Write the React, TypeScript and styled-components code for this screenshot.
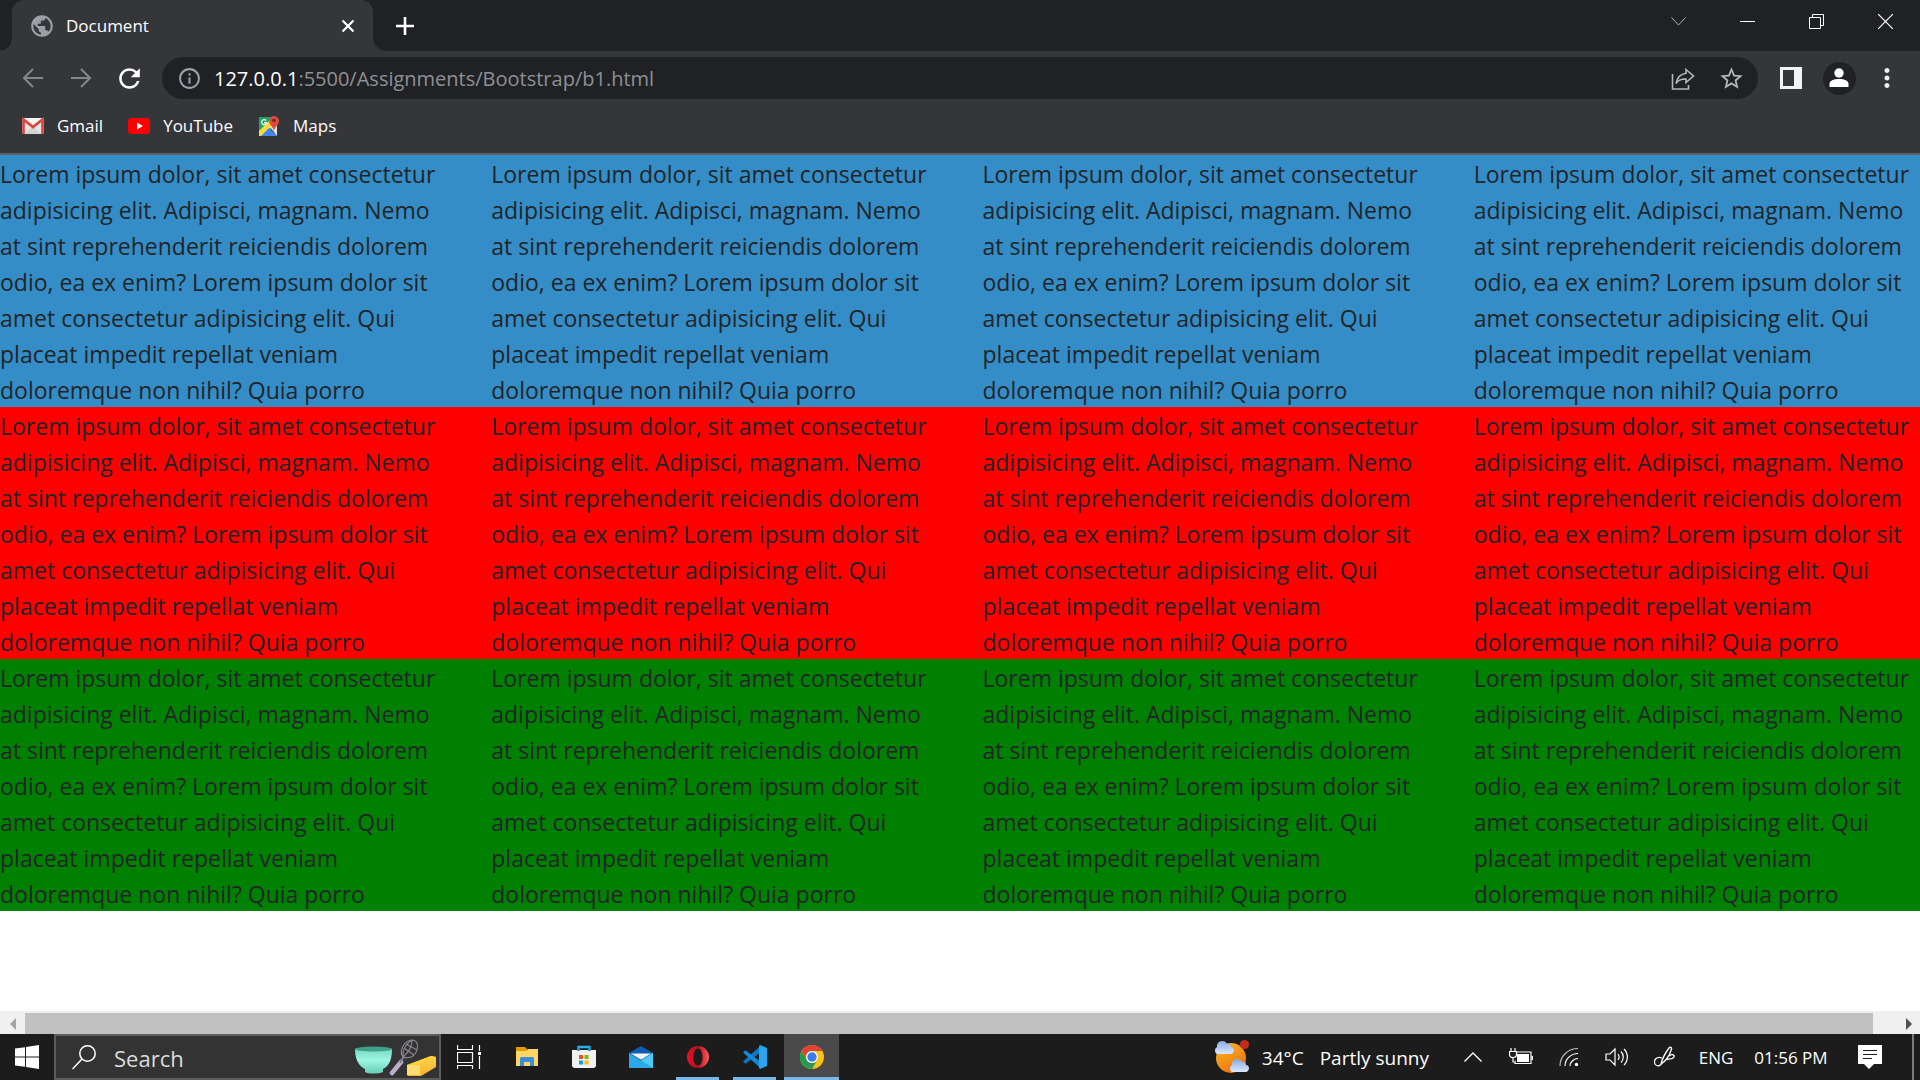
import React from 'react';
import styled, { createGlobalStyle } from 'styled-components';
import { MdPublic, MdRefresh, MdInfoOutline, MdStarBorder, MdMoreVert } from 'react-icons/md';

const GlobalStyle = createGlobalStyle`
  * { box-sizing: border-box; }
  body { margin: 0; background: #fff; font-family: "Open Sans", "Noto Sans", sans-serif; }
  button, input { font: inherit; color: inherit; }
  svg { display: block; flex: none; }
`;

const Screen = styled.div`
  display: flex;
  flex-direction: column;
  height: 100vh;
  overflow: hidden;
`;

/* ---------- browser frame ---------- */

const TabStrip = styled.header`
  display: flex;
  justify-content: space-between;
  height: 51px;
  flex: none;
  background: #202124;
  color: #fff;
`;

const Tabs = styled.div`
  display: flex;
  padding-left: 12px;
`;

const Tab = styled.div`
  position: relative;
  display: flex;
  align-items: center;
  width: 361px;
  padding: 0 13px 0 17px;
  background: #35363a;
  border-radius: 12px 12px 0 0;
  font-size: 17px;

  &::before,
  &::after {
    content: "";
    position: absolute;
    bottom: 0;
    width: 12px;
    height: 12px;
  }
  &::before {
    right: 100%;
    background: radial-gradient(circle at 0 0, transparent 11px, #35363a 12px);
  }
  &::after {
    left: 100%;
    background: radial-gradient(circle at 100% 0, transparent 11px, #35363a 12px);
  }
`;

const TabTitle = styled.span`
  flex: 1;
  margin-left: 11px;
  line-height: 24px;
`;

const IconButton = styled.button<{ $w?: number; $color?: string }>`
  display: flex;
  align-items: center;
  justify-content: center;
  flex: none;
  width: ${(p) => p.$w ?? 48}px;
  padding: 0;
  border: 0;
  background: none;
  color: ${(p) => p.$color ?? '#fff'};
`;

const NewTab = styled(IconButton)`
  margin-left: 16px;
`;

const WindowControls = styled.div`
  display: flex;
  height: 43px;
`;

const Toolbar = styled.nav`
  display: flex;
  flex: none;
  height: 54px;
  padding: 0 9px;
  background: #35363a;
`;

const AddressBar = styled.form`
  display: flex;
  align-items: center;
  flex: 1;
  min-width: 0;
  margin: 6px 9px;
  padding: 1px 3px 0 15px;
  border-radius: 21px;
  background: #202124;
  font-size: 20px;
  line-height: 28px;
`;

const Host = styled.label`
  margin-left: 12px;
  color: #fff;
`;

const UrlInput = styled.input`
  flex: 1;
  min-width: 0;
  padding: 0;
  border: 0;
  outline: 0;
  background: none;
  color: #8f9093;
`;

const Avatar = styled.span`
  display: grid;
  place-items: center;
  width: 33px;
  height: 33px;
  border-radius: 50%;
  background: #202124;
`;

const Bookmarks = styled.nav`
  display: flex;
  align-items: center;
  flex: none;
  gap: 25px;
  height: 50px;
  padding: 0 22px 6px;
  border-bottom: 2px solid #5f6064;
  background: #35363a;
`;

const Bookmark = styled.a`
  display: flex;
  align-items: center;
  gap: 13px;
  color: #fff;
  font-size: 17px;
  line-height: 24px;
  text-decoration: none;
`;

/* ---------- web page ---------- */

const Viewport = styled.main`
  flex: 1;
  min-height: 0;
  padding-top: 0;
  overflow: hidden;
  background: #fff;
`;

const Band = styled.section<{ $bg: string }>`
  display: grid;
  grid-template-columns: repeat(4, 1fr);
  width: calc(100% + 45px);
  padding-top: 1px;
  background: ${(p) => p.$bg};
`;

const Copy = styled.p`
  margin: 0 0 -1px;
  color: #212529;
  font-size: 23px;
  line-height: 36px;
  white-space: nowrap;
`;

const Scrollbar = styled.div`
  display: flex;
  flex: none;
  height: 23px;
  padding-top: 2px;
  background: #f0f0f0;
`;

const Thumb = styled.div`
  flex: 1;
  background: #c1c1c1;
`;

const ScrollButton = styled(IconButton)`
  height: 21px;
`;

/* ---------- taskbar ---------- */

const Taskbar = styled.footer`
  display: flex;
  flex: none;
  height: 46px;
  background: #1c1c1c;
  color: #fff;
`;

const SearchBox = styled.label`
  display: flex;
  align-items: center;
  width: 387px;
  padding: 0 2px 0 16px;
  border: 2px solid #5c5c5c;
  background: #333;
`;

const SearchInput = styled.input`
  flex: 1;
  min-width: 0;
  padding: 2px 0 0;
  margin-left: 18px;
  border: 0;
  outline: 0;
  background: none;
  font-size: 22px;
  line-height: 30px;

  &::placeholder {
    color: #dcdcdc;
    opacity: 1;
  }
`;

const AppButton = styled(IconButton)`
  width: 57px;
`;

const RunningApp = styled(AppButton)`
  width: 43px;
  margin: 0 7px;
  border-top: 3px solid transparent;
  border-bottom: 3px solid #76b9ed;
`;

const ActiveApp = styled(AppButton)`
  width: 55px;
  margin-left: 1px;
  border-top: 3px solid #4a4a4a;
  border-bottom: 3px solid #76b9ed;
  background: #4a4a4a;
`;

const Apps = styled.div`
  display: flex;
  padding-right: 1px;
`;

const Tray = styled.div`
  display: flex;
  margin-left: auto;
`;

const Weather = styled.button`
  display: flex;
  align-items: center;
  padding: 0 20px 0 0;
  border: 0;
  background: none;
  color: #fff;
  font-size: 19px;
  line-height: 28px;
`;

const WeatherText = styled.span`
  display: flex;
  gap: 16px;
  padding: 2px 0 0 12px;
`;

const TrayText = styled(IconButton)`
  font-size: 17px;
  white-space: nowrap;
`;

const ShowDesktop = styled.button`
  width: 8px;
  margin-left: 11px;
  padding: 0;
  border: 0;
  border-left: 2px solid #7a7a7a;
  background: none;
`;

/* ---------- drawings ---------- */

type ArtProps = { w: number; h: number; children: React.ReactNode };
const Art = ({ w, h, children }: ArtProps) => (
  <svg width={w} height={h} viewBox={`0 0 ${w} ${h}`} fill="none" aria-hidden="true">
    {children}
  </svg>
);

const Arrow = ({ flip }: { flip?: boolean }) => (
  <Art w={20} h={20}>
    <path
      d={flip ? 'M0 10h18.5M10 1l9 9-9 9' : 'M20 10H1.5M10 1l-9 9 9 9'}
      stroke="#85868a"
      strokeWidth="2"
    />
  </Art>
);

const GmailIcon = () => (
  <Art w={22} h={18}>
    <rect x="0" y="1" width="22" height="16" rx="1.5" fill="#e6e6e6" />
    <path d="M3 17l8-8 8 8z" fill="#d3d3d3" />
    <path d="M3 1h16l-8 7z" fill="#f7f7f7" />
    <path d="M1.5 17V2.5L11 10l9.500-7.500V17" stroke="#d8453a" strokeWidth="2.600" />
  </Art>
);

const YouTubeIcon = () => (
  <Art w={22} h={16}>
    <rect width="22" height="16" rx="3.500" fill="#f00" />
    <path d="M9 4.500l6 3.500-6 3.500z" fill="#fff" />
  </Art>
);

const MapsIcon = () => (
  <Art w={22} h={22}>
    <path d="M1 2h17v8L7 21H1z" fill="#1fa463" />
    <path d="M1 16L14 3l4 4L4 21H1z" fill="#fdd93b" />
    <path d="M3 21l8-8 8 8z" fill="#4387f5" />
    <path d="M12 12l6-6 1 2v13z" fill="#e4e4e4" />
    <path d="M16 1a5 5 0 0 1 5 5c0 4-4 5-5 10-1-5-5-6-5-10a5 5 0 0 1 5-5z" fill="#dd4b3e" />
    <circle cx="16" cy="5.500" r="1.800" fill="#7c201a" />
    <path d="M8 5.500a2.500 2.500 0 1 0 .5 2.200H6" stroke="#fff" strokeWidth="1.200" />
  </Art>
);

const ShareIcon = () => (
  <Art w={24} h={22}>
    <path d="M1.500 6v15h16v-4" stroke="#b5b6b9" strokeWidth="1.600" />
    <path d="M15 1.500l7.500 6.500-7.500 6.500V11c-5-.2-8 1.300-10 4.500C6 10 9 6 15 5.200z" stroke="#b5b6b9" strokeWidth="1.600" />
  </Art>
);

const SidePanelIcon = () => (
  <Art w={22} h={22}>
    <path fillRule="evenodd" d="M0 0h22v22H0zM3 3v16h11V3z" fill="#f1f3f4" />
  </Art>
);

const PersonIcon = () => (
  <Art w={20} h={20}>
    <circle cx="10" cy="5" r="4.700" fill="#fff" />
    <path d="M.5 19v-3c0-3.500 4-5 9.500-5s9.500 1.500 9.500 5v3z" fill="#fff" />
  </Art>
);

const SearchArt = () => (
  <Art w={82} h={38}>
    <defs>
      <linearGradient id="bowl" x1="0" y1="0" x2="0" y2="1">
        <stop offset="0" stopColor="#73d8c0" />
        <stop offset=".45" stopColor="#a0f6e4" />
        <stop offset="1" stopColor="#64cdb6" />
      </linearGradient>
      <linearGradient id="butter" x1="0" y1="0" x2="0" y2="1">
        <stop offset="0" stopColor="#fbd246" />
        <stop offset="1" stopColor="#f9b233" />
      </linearGradient>
    </defs>
    <path d="M0 11c0 11 4 17 10 20v3c3 2 14 2 18 0v-3c6-3 9-9 9-20z" fill="url(#bowl)" />
    <ellipse cx="18.500" cy="11" rx="18.500" ry="2.600" fill="#3f9f8d" />
    <path d="M37 35l9-11" stroke="#b9b0cc" strokeWidth="4.500" strokeLinecap="round" />
    <path d="M45 25l4-7" stroke="#80788e" strokeWidth="2" />
    <g stroke="#8d8698" strokeWidth="1.100">
      <path d="M48 19c-4-5 0-16 9-17 8 0 7 13-1 17-3 1-6 1-8 0z" />
      <path d="M48 19c-1-7 3-14 9-17M48 19c4-4 9-8 9-17" />
      <path d="M49 10l10 7M51 6l11 6" />
    </g>
    <path d="M52 27l24-9 5 1v10l-15 9H53l-1-1z" fill="url(#butter)" />
    <path d="M52 27l12-1 17-7-5-1-24 9z" fill="#ffcf3f" />
    <path d="M52 27h13v10H52z" fill="#ffdc72" />
  </Art>
);

const TaskViewIcon = () => (
  <Art w={26} h={24}>
    <path d="M.5 0v4.500h15V0M.5 24v-3.500h15V24M.5 7.500h15v10H.5zM22.500 0v6M22.500 11v13" stroke="#fff" strokeWidth="1.200" />
    <path d="M21 7h3v3h-3z" fill="#fff" />
  </Art>
);

const FolderIcon = () => (
  <Art w={22} h={22}>
    <path d="M0 1h9l2 2v4H0z" fill="#e19a07" />
    <path d="M0 5h10l2-2h10v17H0z" fill="#ffd566" />
    <path d="M4 20v-8l1-1h12l1 1v8h-4v-4H8v4z" fill="#3b8fd8" />
  </Art>
);

const StoreIcon = () => (
  <Art w={24} h={24}>
    <path d="M6.500 7V2h11v5" stroke="#29aee8" strokeWidth="2.400" />
    <path d="M0 5h24v15a3 3 0 0 1-3 3H3a3 3 0 0 1-3-3z" fill="#f1f1f1" />
    <path d="M6.500 6V2.500M17.500 6V2.500" stroke="#1c8fd0" strokeWidth="2.400" />
    <path d="M7 10h4v4H7z" fill="#f25022" />
    <path d="M12.500 10h4v4h-4z" fill="#7fba00" />
    <path d="M7 15.500h4v4H7z" fill="#00a4ef" />
    <path d="M12.500 15.500h4v4h-4z" fill="#ffb900" />
  </Art>
);

const MailIcon = () => (
  <Art w={24} h={24}>
    <path d="M0 8l12-7 12 7v6H0z" fill="#0f5db3" />
    <path d="M0 8l12 7.500L24 8v15H0z" fill="#2ba7ea" />
    <path d="M24 8v15L12 15.500z" fill="#4dcaf8" />
    <path d="M2 8.500h20L12 14.800z" fill="#f4f4f4" />
  </Art>
);

const OperaIcon = () => (
  <Art w={22} h={22}>
    <defs>
      <linearGradient id="opera" x1="0" y1="0" x2="1" y2="0">
        <stop offset="0" stopColor="#e8112b" />
        <stop offset=".5" stopColor="#b30e1c" />
        <stop offset="1" stopColor="#ff5c5c" />
      </linearGradient>
    </defs>
    <path
      fillRule="evenodd"
      d="M11 0a11 11 0 1 1 0 22 11 11 0 0 1 0-22zM11 2.500C8 2.500 6.500 6.500 6.500 11S8 19.500 11 19.500s4.500-4 4.500-8.500-1.500-8.500-4.500-8.500z"
      fill="url(#opera)"
    />
  </Art>
);

const CodeIcon = () => (
  <Art w={24} h={24}>
    <path d="M18 .5L0 16.500l2.500 2.300L18 7z" fill="#0a78c4" />
    <path d="M18 23.500L0 7.500l2.500-2.300L18 17z" fill="#1489d8" />
    <path d="M17 0l7 3v18l-7 3-1-1.500V1.500z" fill="#27a5f2" />
  </Art>
);

const ChromeIcon = () => (
  <Art w={24} h={24}>
    <circle cx="12" cy="12" r="12" fill="#fbc116" />
    <path d="M1.600 6A12 12 0 0 1 22.400 6H12a6 6 0 0 0-5.200 9z" fill="#dc4437" />
    <path d="M1.600 6A12 12 0 0 0 12 24l5.200-9A6 6 0 0 1 6.800 15z" fill="#249c50" />
    <circle cx="12" cy="12" r="6" fill="#fff" />
    <circle cx="12" cy="12" r="4.700" fill="#3b7ded" />
  </Art>
);

const CLOUD = 'M4 14a4 4 0 0 1 0-7 5 5 0 0 1 5-6c3 0 4 1 5 3 3-1 4 1 4 3 4 0 4 6 0 7z';

const WeatherIcon = () => (
  <Art w={37} h={34}>
    <defs>
      <linearGradient id="sun" x1="0" y1="0" x2=".6" y2="1">
        <stop offset="0" stopColor="#f9b928" />
        <stop offset="1" stopColor="#ee7410" />
      </linearGradient>
      <linearGradient id="cloud" x1="0" y1="0" x2="0" y2="1">
        <stop offset="0" stopColor="#86aae6" />
        <stop offset="1" stopColor="#dce9fb" />
      </linearGradient>
    </defs>
    <circle cx="18" cy="18" r="15" fill="url(#sun)" />
    <path d={CLOUD} fill="url(#cloud)" />
    <path d={CLOUD} transform="translate(15 18)" fill="url(#cloud)" />
    <circle cx="31.500" cy="4.500" r="4.500" fill="#c42b1c" />
  </Art>
);

const BatteryIcon = () => (
  <Art w={24} h={18}>
    <path d="M8 4h14v11.500H6v-3" stroke="#fff" strokeWidth="1.200" />
    <path d="M8 6h12v8H8z" fill="#fff" />
    <path d="M22.500 8H24v4h-1.500z" fill="#fff" />
    <path d="M.5 3.500h7v3c0 2-1 3-3.500 3s-3.500-1-3.500-3zM2 0v3.500M6 0v3.500M4 9.500V14h2" fill="#1c1c1c" stroke="#fff" strokeWidth="1.200" />
  </Art>
);

const WifiIcon = () => (
  <Art w={20} h={20}>
    <g stroke="#fff" strokeWidth="1.200">
      <path d="M1 19C1 9 9 1.500 19 1.500" stroke="#bbb" />
      <path d="M6 19c0-7 6-12.500 13-12.500M11 19c0-4 4-7.500 8-7.500" />
    </g>
    <circle cx="17.500" cy="17.500" r="1.700" fill="#fff" />
  </Art>
);

const SpeakerIcon = () => (
  <Art w={24} h={20}>
    <path d="M1 7h4l5-5v16l-5-5H1z" stroke="#fff" strokeWidth="1.200" />
    <path d="M13 7c1.500 2 1.500 4 0 6M16 4.500c3 3 3 8 0 11M19 2c4.500 4.500 4.500 11.500 0 16" stroke="#fff" strokeWidth="1.200" />
  </Art>
);

const PenIcon = () => (
  <Art w={22} h={22}>
    <path
      d="M7 18c1-4 5-12 8-16 1-1.500 3-.5 2.500 1C16 8 12 15 7 18zM8 12c-5-2-9 2-7 6 2 3 6 2 7-1M15 10c4-3 7 0 4 2-2 1.500-5 0-6 2"
      stroke="#fff"
      strokeWidth="1.300"
    />
  </Art>
);

const NoticeIcon = () => (
  <Art w={24} h={24}>
    <path d="M0 0h24v19h-8l-5 5-5-5H0z" fill="#fff" />
    <path d="M5 5.500h14M5 9.500h14M5 13.500h9" stroke="#1c1c1c" strokeWidth="1.200" />
  </Art>
);

/* ---------- content ---------- */

const LINES = [
  'Lorem ipsum dolor, sit amet consectetur',
  'adipisicing elit. Adipisci, magnam. Nemo',
  'at sint reprehenderit reiciendis dolorem',
  'odio, ea ex enim? Lorem ipsum dolor sit',
  'amet consectetur adipisicing elit. Qui',
  'placeat impedit repellat veniam',
  'doloremque non nihil? Quia porro',
];

const BANDS = ['#348dc6', '#ff0000', '#008000'];

const BOOKMARKS = [
  { name: 'Gmail', icon: <GmailIcon /> },
  { name: 'YouTube', icon: <YouTubeIcon /> },
  { name: 'Maps', icon: <MapsIcon /> },
];

const Paragraph = () => (
  <Copy>
    {LINES.map((line) => (
      <React.Fragment key={line}>
        {line}
        <br />
      </React.Fragment>
    ))}
  </Copy>
);

export default function App() {
  return (
    <Screen>
      <GlobalStyle />
      <TabStrip>
        <Tabs>
          <Tab>
            <MdPublic size={26} color="#9aa0a6" />
            <TabTitle>Document</TabTitle>
            <IconButton $w={24} aria-label="Close tab">
              <Art w={14} h={14}>
                <path d="M1.500 1.500l11 11M12.500 1.500l-11 11" stroke="currentColor" strokeWidth="2.200" />
              </Art>
            </IconButton>
          </Tab>
          <NewTab $w={32} aria-label="New tab">
            <Art w={18} h={18}>
              <path d="M9 0v18M0 9h18" stroke="currentColor" strokeWidth="2.600" />
            </Art>
          </NewTab>
        </Tabs>
        <WindowControls>
          <IconButton $w={69} aria-label="Search tabs">
            <Art w={15} h={9}>
              <path d="M.5.5l7 7.500 7-7.500" stroke="#b4b4b4" />
            </Art>
          </IconButton>
          <IconButton $w={69} aria-label="Minimize">
            <Art w={15} h={1}>
              <path d="M0 .5h15" stroke="currentColor" />
            </Art>
          </IconButton>
          <IconButton $w={69} aria-label="Restore">
            <Art w={15} h={15}>
              <path d="M.5 3.500h11v11H.5zM3.500 3.500v-3h11v11h-3" stroke="currentColor" />
            </Art>
          </IconButton>
          <IconButton $w={69} aria-label="Close">
            <Art w={15} h={15}>
              <path d="M0 0l15 15M15 0L0 15" stroke="currentColor" strokeWidth="1.200" />
            </Art>
          </IconButton>
        </WindowControls>
      </TabStrip>

      <Toolbar>
        <IconButton aria-label="Back">
          <Arrow />
        </IconButton>
        <IconButton aria-label="Forward">
          <Arrow flip />
        </IconButton>
        <IconButton aria-label="Reload">
          <MdRefresh size={31} />
        </IconButton>
        <AddressBar onSubmit={(e) => e.preventDefault()}>
          <MdInfoOutline size={25} color="#9aa0a6" />
          <Host htmlFor="url">127.0.0.1</Host>
          <UrlInput id="url" defaultValue=":5500/Assignments/Bootstrap/b1.html" />
          <IconButton type="button" aria-label="Share">
            <ShareIcon />
          </IconButton>
          <IconButton type="button" $color="#b5b6b9" aria-label="Bookmark this page">
            <MdStarBorder size={27} />
          </IconButton>
        </AddressBar>
        <IconButton aria-label="Side panel">
          <SidePanelIcon />
        </IconButton>
        <IconButton aria-label="Profile">
          <Avatar>
            <PersonIcon />
          </Avatar>
        </IconButton>
        <IconButton $color="#f1f3f4" aria-label="Menu">
          <MdMoreVert size={30} />
        </IconButton>
      </Toolbar>

      <Bookmarks>
        {BOOKMARKS.map((b) => (
          <Bookmark key={b.name} href="#">
            {b.icon}
            {b.name}
          </Bookmark>
        ))}
      </Bookmarks>

      <Viewport>
        {BANDS.map((bg) => (
          <Band key={bg} $bg={bg}>
            <Paragraph />
            <Paragraph />
            <Paragraph />
            <Paragraph />
          </Band>
        ))}
      </Viewport>

      <Scrollbar>
        <ScrollButton $w={25} aria-label="Scroll left">
          <Art w={6} h={12}>
            <path d="M6 0v12L0 6z" fill="#a3a3a3" />
          </Art>
        </ScrollButton>
        <Thumb />
        <ScrollButton $w={47} aria-label="Scroll right">
          <Art w={30} h={12}>
            <path d="M24 0v12l6-6z" fill="#505050" />
          </Art>
        </ScrollButton>
      </Scrollbar>

      <Taskbar>
        <IconButton $w={54} aria-label="Start">
          <Art w={24} h={24}>
            <path d="M0 3.500l10-1.300V11.500H0zM11 2l13-2v11.500H11zM0 12.500h10v9.300L0 20.500zM11 12.500h13V24l-13-2z" fill="#fff" />
          </Art>
        </IconButton>
        <SearchBox>
          <Art w={24} h={25}>
            <circle cx="15.500" cy="8.500" r="7.700" stroke="#fff" strokeWidth="1.500" />
            <path d="M10 14L.5 24" stroke="#fff" strokeWidth="1.500" />
          </Art>
          <SearchInput placeholder="Search" aria-label="Search" />
          <SearchArt />
        </SearchBox>
        <Apps>
          <AppButton aria-label="Task view">
            <TaskViewIcon />
          </AppButton>
          <AppButton aria-label="File Explorer">
            <FolderIcon />
          </AppButton>
          <AppButton aria-label="Microsoft Store">
            <StoreIcon />
          </AppButton>
          <AppButton aria-label="Mail">
            <MailIcon />
          </AppButton>
          <RunningApp aria-label="Opera">
            <OperaIcon />
          </RunningApp>
          <RunningApp aria-label="Visual Studio Code">
            <CodeIcon />
          </RunningApp>
          <ActiveApp aria-label="Google Chrome">
            <ChromeIcon />
          </ActiveApp>
        </Apps>

        <Tray>
          <Weather>
            <WeatherIcon />
            <WeatherText>
              <span>34°C</span>
              <span>Partly sunny</span>
            </WeatherText>
          </Weather>
          <IconButton aria-label="Show hidden icons">
            <Art w={18} h={10}>
              <path d="M.5 9.500L9 1l8.500 8.500" stroke="#fff" strokeWidth="1.300" />
            </Art>
          </IconButton>
          <IconButton aria-label="Battery">
            <BatteryIcon />
          </IconButton>
          <IconButton aria-label="Network">
            <WifiIcon />
          </IconButton>
          <IconButton aria-label="Volume">
            <SpeakerIcon />
          </IconButton>
          <IconButton aria-label="Pen">
            <PenIcon />
          </IconButton>
          <TrayText $w={54}>ENG</TrayText>
          <TrayText $w={96}>01:56 PM</TrayText>
          <IconButton $w={62} aria-label="Notifications">
            <NoticeIcon />
          </IconButton>
          <ShowDesktop aria-label="Show desktop" />
        </Tray>
      </Taskbar>
    </Screen>
  );
}
